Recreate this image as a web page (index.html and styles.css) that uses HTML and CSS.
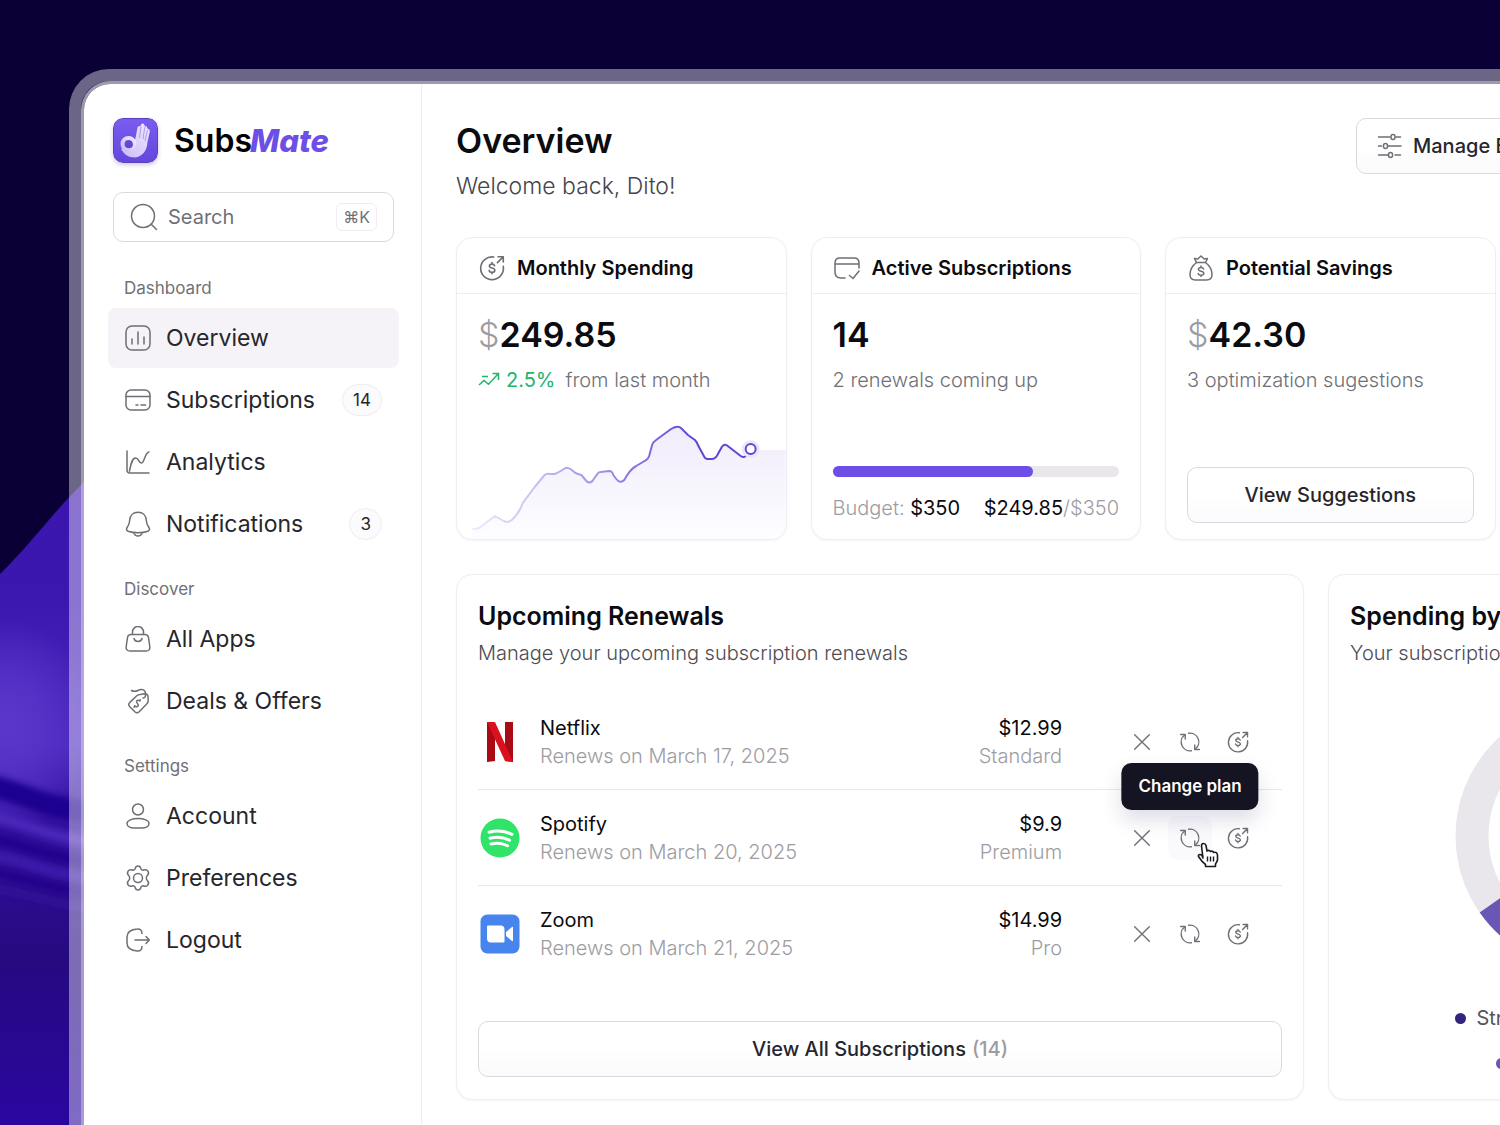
FILE: index.html
```
<!DOCTYPE html>
<html lang="en">
<head>
  <meta charset="UTF-8" />
  <meta name="viewport" content="width=device-width, initial-scale=1.0"/>
  <title>SubsMate - Overview</title>
  <link rel="stylesheet" href="styles.css">
</head>
<body>
  <!-- shared icons -->
  <svg class="sprite" aria-hidden="true">
    <symbol id="i-spend" viewBox="0 0 24 24">
      <path d="M13.5 1.9A10.5 10.5 0 1 0 22.4 10.5"/>
      <path d="M17 7l5.2-5.2M17.6 1.6h4.8v4.8"/>
      <path d="M14.4 9.9c-.3-1-1.2-1.5-2.4-1.5-1.4 0-2.4.7-2.4 1.8 0 2.5 5 1.2 5 3.8 0 1.200-1.100 1.900-2.600 1.900-1.400 0-2.400-.7-2.600-1.800M12 7v1.400M12 15.900v1.300"/>
    </symbol>
    <symbol id="i-close" viewBox="0 0 24 24">
      <path d="M4 4l16 16M20 4L4 20"/>
    </symbol>
    <symbol id="i-swap" viewBox="0 0 24 24">
      <path d="M10.500 2.400A9.700 9.700 0 0 1 17.800 19.700M13.500 21.600A9.700 9.700 0 0 1 6.200 4.300"/>
      <path d="M1.800 3.800h5v5M22.200 20.200h-5v-5"/>
    </symbol>
  </svg>

  <svg class="wallpaper" viewBox="0 0 100 1125" preserveAspectRatio="none" aria-hidden="true">
    <defs>
      <linearGradient id="wave" x1="0" y1="0" x2="0" y2="1">
        <stop offset="0" stop-color="#3a16ad"/>
        <stop offset=".2" stop-color="#3b17b0"/>
        <stop offset=".42" stop-color="#4a27bc"/>
        <stop offset=".55" stop-color="#2f0f9c"/>
        <stop offset=".75" stop-color="#260a80"/>
        <stop offset="1" stop-color="#2a06a0"/>
      </linearGradient>
      <radialGradient id="glow">
        <stop offset="0" stop-color="#5b38cc"/>
        <stop offset=".4" stop-color="#5935c9" stop-opacity=".8"/>
        <stop offset="1" stop-color="#5b38cc" stop-opacity="0"/>
      </radialGradient>
      <filter id="soft" x="-20%" y="-50%" width="140%" height="200%"><feGaussianBlur stdDeviation="3"/></filter>
    </defs>
    <path d="M0 574C30 545 55 510 84 482L100 466V1125H0z" fill="url(#wave)"/>
    <ellipse cx="8" cy="725" rx="85" ry="105" fill="url(#glow)"/>
    <g fill="none" filter="url(#soft)">
      <path d="M-10 786C25 792 40 810 110 814" stroke="#1f0090" stroke-width="22"/>
      <path d="M-10 816C25 822 45 838 110 844" stroke="#4a28ba" stroke-width="12"/>
      <path d="M-10 838C25 844 45 858 110 864" stroke="#20008e" stroke-width="10"/>
      <path d="M-10 855C25 860 45 874 110 882" stroke="#3c1bae" stroke-width="9"/>
      <path d="M-10 872C25 877 45 890 110 896" stroke="#20008a" stroke-width="8"/>
      <path d="M-10 888C25 892 45 904 110 910" stroke="#32129a" stroke-width="5"/>
    </g>
  </svg>

  <div class="frame">
    <div class="app">
      <aside class="sidebar">
        <a class="brand" href="#">
          <svg class="brand-mark" viewBox="0 0 45 45" aria-hidden="true">
            <defs>
              <linearGradient id="mark" x1="0" y1="0" x2="0" y2="1">
                <stop offset="0" stop-color="#7a5cf0"/>
                <stop offset="1" stop-color="#6546dd"/>
              </linearGradient>
              <linearGradient id="hand" x1="1" y1="0" x2="0" y2="1">
                <stop offset="0" stop-color="#efe8ff"/>
                <stop offset="1" stop-color="#cbbaf8"/>
              </linearGradient>
            </defs>
            <rect x=".5" y=".5" width="44" height="44" rx="9" fill="url(#mark)" stroke="#5c40bd"/>
            <path d="M22.500 20L24.500 9.500Q25.500 7 27.300 8.500L28 6.500Q30 4.500 31.500 7L32 8.500Q34 7.500 34.300 10L35 11Q37 10.500 36.800 13.500L34.500 24C34 32 30 38.500 22 39.500 15 39.500 11 36 8 31L12 30 20 28z" fill="url(#hand)"/>
            <circle cx="15.500" cy="26" r="6" fill="none" stroke="url(#hand)" stroke-width="4"/>
            <path d="M28 8.500L26.500 20M31.800 9L30 21M34.500 12L32 23" fill="none" stroke="#9f86ee" stroke-width=".8"/>
            <circle cx="16" cy="26.500" r="3.800" fill="#6446cf"/>
          </svg>
          <span class="brand-name">Subs<em>Mate</em></span>
        </a>

        <label class="search">
          <svg class="icon icon-lg" viewBox="0 0 28 28"><circle cx="13" cy="13" r="11.500"/><path d="M21.500 21.500l5 5"/></svg>
          <input type="search" placeholder="Search" aria-label="Search">
          <kbd>⌘K</kbd>
        </label>

        <nav>
          <section class="nav-group">
            <h2>Dashboard</h2>
            <a class="nav-item active" href="#">
              <svg class="icon" viewBox="0 0 26 26"><rect x="1" y="1" width="24" height="24" rx="6"/><path d="M7 14v5M13 7v12M19 12v7"/></svg>
              <span>Overview</span>
            </a>
            <a class="nav-item" href="#">
              <svg class="icon" viewBox="0 0 26 26"><rect x="1" y="3" width="24" height="20" rx="5"/><path d="M1 9.500h24M11 18h2M16 18h4.500"/></svg>
              <span>Subscriptions</span>
              <span class="count">14</span>
            </a>
            <a class="nav-item" href="#">
              <svg class="icon" viewBox="0 0 26 26"><path d="M2 2v19q0 3 3 3h19"/><path d="M4.500 22C6 15 7 9 10.500 9s3 5 6 5 3-10 7.500-11"/></svg>
              <span>Analytics</span>
            </a>
            <a class="nav-item" href="#">
              <svg class="icon" viewBox="0 0 26 26"><path d="M13 1.200c-5 0-8 3.400-8.300 8-.3 4.300-1 5-2.600 7.300-1 1.500-.8 3 1 3.700 5.500 2 14.300 2 19.800 0 1.800-.7 2-2.200 1-3.700-1.600-2.300-2.300-3-2.600-7.300-.3-4.600-3.300-8-8.300-8zM8.500 21.800c.8 1.800 2.300 3.200 4.500 3.200s3.700-1.400 4.500-3.200"/></svg>
              <span>Notifications</span>
              <span class="count">3</span>
            </a>
          </section>

          <section class="nav-group">
            <h2>Discover</h2>
            <a class="nav-item" href="#">
              <svg class="icon" viewBox="0 0 26 26"><path d="M6 8.500h14q3 0 3.500 3l1.300 9q.5 4.500-3.800 4.500H5q-4.300 0-3.800-4.500l1.300-9q.5-3 3.500-3z"/><path d="M7.500 8.500V6a5.500 5.500 0 0 1 11 0v2.500M9 12.500c1 4 7 4 8 0"/></svg>
              <span>All Apps</span>
            </a>
            <a class="nav-item" href="#">
              <svg class="icon" viewBox="0 0 26 26"><path d="M15 6.500l5-.7q2.500 0 3 2.500l.2 4.200q0 2-1.500 3.500l-7.500 7.800q-2.200 2-4.400 0l-5-5q-2.100-2.200 0-4.400l7-6.600q1.400-1.200 3.200-1.300z"/><path d="M6.500 2.500c4 2.500 6-.5 9.500-1 4-.3 5 3 4.500 6-.2 1.500-1 2.500-2.500 2.500"/><path d="M15 13c-1-1.200-2.500-1-3.300 0-1.400 2 2.800 3 1.400 5-.9 1.100-2.500 1-3.500-.2M15.300 11.700l-.9 1M10 18.200l-1 1"/></svg>
              <span>Deals &amp; Offers</span>
            </a>
          </section>

          <section class="nav-group">
            <h2>Settings</h2>
            <a class="nav-item" href="#">
              <svg class="icon" viewBox="0 0 26 26"><circle cx="13" cy="6.500" r="5.500"/><path d="M13 15.500c6 0 11 2 11 5s-3.500 4.500-7 4.500H9c-3.500 0-7-1.500-7-4.500s5-5 11-5z"/></svg>
              <span>Account</span>
            </a>
            <a class="nav-item" href="#">
              <svg class="icon" viewBox="0 0 26 26"><circle cx="13" cy="13" r="4.500"/><path d="M10.200 3.300c.3-1.400 1.200-2.300 2.800-2.300s2.500.9 2.800 2.300c.3 1.500 1.600 2.200 3 1.700 1.700-.6 3.100-.5 4.100 1.100s.8 3-.4 4.100c-1.600 1.500-1.600 4.100 0 5.600 1.200 1.100 1.400 2.500.4 4.100s-2.400 1.700-4.100 1.100c-1.400-.5-2.700.2-3 1.700-.3 1.400-1.200 2.300-2.800 2.300s-2.500-.9-2.800-2.300c-.3-1.500-1.600-2.200-3-1.700-1.700.6-3.100.5-4.100-1.100s-.8-3 .4-4.100c1.600-1.500 1.600-4.100 0-5.600-1.200-1.100-1.400-2.500-.4-4.100S5.500 4.400 7.200 5c1.400.5 2.700-.2 3-1.700z"/></svg>
              <span>Preferences</span>
            </a>
            <a class="nav-item" href="#">
              <svg class="icon" viewBox="0 0 26 26"><path d="M17 6.500C17 3.500 15 1.600 12.500 2 6 2.500 2 5.500 2 10v6c0 4.500 4 7.500 10.500 8 2.500.4 4.500-1.500 4.500-4.500"/><path d="M10 13h14M21 9.500l3.300 3.500-3.300 3.500"/></svg>
              <span>Logout</span>
            </a>
          </section>
        </nav>
      </aside>

      <main>
        <header class="page-head">
          <div>
            <h1>Overview</h1>
            <p>Welcome back, Dito!</p>
          </div>
          <div class="head-actions">
            <button type="button" class="btn">
              <svg class="icon" viewBox="0 0 26 26"><path d="M1.500 4H13M19 4h4.500M1.500 13h3M10.500 13h13.500M1.500 22H11M18 22h5.500"/><rect x="14" y="1.500" width="4" height="5" rx="2"/><rect x="6.500" y="10.500" width="4" height="5" rx="2"/><rect x="11.500" y="19.500" width="4" height="5" rx="2"/></svg>
              Manage Budget
            </button>
            <button type="button" class="btn btn-dark">
              <svg class="icon" viewBox="0 0 26 26"><path d="M13 4v18M4 13h18"/></svg>
              Add Subscription
            </button>
          </div>
        </header>

        <div class="stats">
          <section class="card stat">
            <h2><svg class="icon"><use href="#i-spend"/></svg>Monthly Spending</h2>
            <div class="stat-body">
              <p class="figure"><span>$</span>249.85</p>
              <p class="note">
                <svg class="trend" viewBox="0 0 22 16" aria-hidden="true"><path d="M1 13l5-4.500 4.500 3.800L20 2M14.500 1.500H20.500V8M4 4.500h6"/></svg>
                <span class="up">2.5%</span> from last month
              </p>
            </div>
            <svg class="chart" viewBox="0 0 330 124" preserveAspectRatio="none" role="img" aria-label="Spending trend">
              <defs>
                <linearGradient id="stroke" x1="0" x2="1" y1="0" y2="0">
                  <stop offset="0" stop-color="#6a4fd8" stop-opacity=".1"/>
                  <stop offset=".4" stop-color="#6a4fd8" stop-opacity=".55"/>
                  <stop offset=".8" stop-color="#5f44d6"/>
                </linearGradient>
                <linearGradient id="fill" x1="0" x2="0" y1="0" y2="1">
                  <stop offset="0" stop-color="#f0ecfc"/>
                  <stop offset="1" stop-color="#fefdff"/>
                </linearGradient>
              </defs>
              <path fill="url(#fill)" d="M15 114L23 112 38 101 51 107 60 100 66 88 80 70 90 59 100 58 111 52 125 60 130 67H136L142 58 155 56 160 65 165 67 176 52 192 44 197 27 218 12H224L240 26 250 44H259L267 30H271L287 43 294 35H330V124H15z"/>
              <path fill="none" stroke="url(#stroke)" stroke-width="2" stroke-linejoin="round" stroke-linecap="round" d="M16 114Q22 114 25 111L38 101 47 106Q51 108 55 105 62 99 66 88L78 72 88 60Q90 58 94 59H98Q101 58 104 56L109 53Q111 52 114 54L119 58Q121 59 125 60L130 66Q133 69 136 66L141 59Q142 57 144 57L153 56Q156 56 157 60L160 64Q164 69 168 65 174 54 180 51L190 45Q192 44 193 41L196 30Q197 27 200 25L215 14Q222 10 225 13L232 20 239 25Q241 27 242 30L248 41Q249 44 252 44H256Q259 44 261 41L266 32Q269 28 272 31L285 41Q288 43 290 41L295 34"/>
              <circle cx="295" cy="34" r="9" fill="#ece6fc"/>
              <circle cx="295" cy="34" r="5" fill="#fff" stroke="#5f44d6" stroke-width="2"/>
            </svg>
          </section>

          <section class="card stat">
            <h2><svg class="icon" viewBox="0 0 26 26"><path d="M11 23H7q-6 0-6-6V8q0-5 5-5h14q5 0 5 5v5M1 9h24M15.500 20.500l3.500 3 6-7.500"/></svg>Active Subscriptions</h2>
            <div class="stat-body">
              <p class="figure">14</p>
              <p class="note">2 renewals coming up</p>
              <div class="budget">
                <div class="bar"><div class="bar-fill" style="width: 70%"></div></div>
                <p><span>Budget: <b>$350</b></span><span><b>$249.85</b>/$350</span></p>
              </div>
            </div>
          </section>

          <section class="card stat">
            <h2><svg class="icon" viewBox="0 0 26 26"><path d="M8.500 7.500h9c4 3 6.500 7.500 6.500 12 0 3.500-2 5.500-5.500 5.500h-11C4 25 2 23 2 19.500c0-4.500 2.500-9 6.500-12z"/><path d="M8.500 7.500L6.500 3.500l3.200.5L13 1l3.300 3 3.200-.5-2 4M15.600 14c-.3-1-1.300-1.600-2.600-1.600-1.500 0-2.600.8-2.600 1.900 0 2.600 5.400 1.300 5.400 4 0 1.200-1.200 2-2.800 2-1.500 0-2.600-.8-2.800-1.900M13 11v1.400M13 20.300v1.300"/></svg>Potential Savings</h2>
            <div class="stat-body">
              <p class="figure"><span>$</span>42.30</p>
              <p class="note">3 optimization sugestions</p>
              <button type="button" class="btn btn-wide">View Suggestions</button>
            </div>
          </section>

          <section class="card stat">
            <h2>Next Payment</h2>
            <div class="stat-body">
              <p class="figure"><span>$</span>12.99</p>
              <p class="note">Netflix, March 17</p>
            </div>
          </section>
        </div>

        <div class="panels">
          <section class="card panel">
            <h2>Upcoming Renewals</h2>
            <p class="lead">Manage your upcoming subscription renewals</p>
            <ul class="renewals">
              <li>
                <svg class="logo" viewBox="0 0 40 40" aria-hidden="true"><path d="M7 0h8v39l-8 1zM25 0h8v40l-8-1z" fill="#a90a14"/><path d="M7 0h8l18 40q-4-1-8-1z" fill="#d9101e"/></svg>
                <div class="who"><strong>Netflix</strong><span>Renews on March 17, 2025</span></div>
                <div class="price"><strong>$12.99</strong><span>Standard</span></div>
                <div class="actions">
                  <button type="button" aria-label="Cancel"><svg class="icon-sm"><use href="#i-close"/></svg></button>
                  <button type="button" aria-label="Change plan"><svg class="icon-sm"><use href="#i-swap"/></svg></button>
                  <button type="button" aria-label="Pay now"><svg class="icon-sm"><use href="#i-spend"/></svg></button>
                </div>
              </li>
              <li>
                <svg class="logo" viewBox="0 0 40 40" aria-hidden="true"><circle cx="20" cy="20" r="19.500" fill="#2fe468"/><path d="M9 14.200c8-2.200 16-1.400 23 2.200M10 20.200c7-1.900 13.500-1.200 19.500 2M11 26c6-1.500 11.500-1 16.500 1.700" fill="none" stroke="#fff" stroke-width="3" stroke-linecap="round"/></svg>
                <div class="who"><strong>Spotify</strong><span>Renews on March 20, 2025</span></div>
                <div class="price"><strong>$9.9</strong><span>Premium</span></div>
                <div class="actions">
                  <button type="button" aria-label="Cancel"><svg class="icon-sm"><use href="#i-close"/></svg></button>
                  <button type="button" class="hovered" aria-label="Change plan">
                    <svg class="icon-sm"><use href="#i-swap"/></svg>
                    <span class="tooltip" role="tooltip">Change plan</span>
                    <svg class="cursor" viewBox="0 0 22 26" aria-hidden="true"><path d="M6 16L4.500 4Q4.500 1.500 6.500 1.500T9 3.500L10 9Q12 7.500 13.500 9.500 15.500 8.500 16.800 10.500 20 9.500 20.500 13V18Q20 20 18.500 22V24.500H8.500V22.500Q5 20 1.500 14.500 1 12.500 3 12.500T6 16z" fill="#fff" stroke="#1a1a22" stroke-width="1.600" stroke-linejoin="round"/><path d="M10.500 14.500v5M13.500 14.500v5M16.500 14.500v5" stroke="#1a1a22" stroke-width="1.400"/></svg>
                  </button>
                  <button type="button" aria-label="Pay now"><svg class="icon-sm"><use href="#i-spend"/></svg></button>
                </div>
              </li>
              <li>
                <svg class="logo" viewBox="0 0 40 40" aria-hidden="true"><rect x=".5" y=".5" width="39" height="39" rx="7" fill="#4784ee"/><path d="M7 12.500q0-1 1-1h12.500q4 0 4 4v12q0 1-1 1H11q-4 0-4-4zM26 18l6-5q1-.7 1 .5v13q0 1.200-1 .5l-6-5z" fill="#fff"/></svg>
                <div class="who"><strong>Zoom</strong><span>Renews on March 21, 2025</span></div>
                <div class="price"><strong>$14.99</strong><span>Pro</span></div>
                <div class="actions">
                  <button type="button" aria-label="Cancel"><svg class="icon-sm"><use href="#i-close"/></svg></button>
                  <button type="button" aria-label="Change plan"><svg class="icon-sm"><use href="#i-swap"/></svg></button>
                  <button type="button" aria-label="Pay now"><svg class="icon-sm"><use href="#i-spend"/></svg></button>
                </div>
              </li>
            </ul>
            <button type="button" class="btn btn-wide">View All Subscriptions <span>(14)</span></button>
          </section>

          <section class="card panel">
            <h2>Spending by Category</h2>
            <p class="lead">Your subscription spending breakdown</p>
            <svg class="donut" viewBox="0 0 268 268" role="img" aria-label="Spending by category">
              <g fill="none" stroke-width="33">
                <circle cx="134" cy="134" r="117" stroke="#e9e7ec"/>
                <path d="M38.200 201.100A117 117 0 0 0 134 251" stroke="#6a57b5"/>
                <path d="M134 251A117 117 0 0 0 251 134" stroke="#35247f"/>
              </g>
            </svg>
            <ul class="legend">
              <li><i class="dot dot-dark"></i>Streaming</li>
              <li><i class="dot dot-light"></i>Productivity</li>
              <li><i class="dot dot-mid"></i>Design</li>
              <li><i class="dot dot-light"></i>Others</li>
            </ul>
          </section>
        </div>
      </main>
    </div>
  </div>
</body>
</html>
```
FILE: styles.css
```
:root {
  --color-primary: #6d4ee6;
  --color-ink: #0b0b10;
  --color-text: #26262c;
  --color-subtle: #707076;
  --color-muted: #9d9ca2;
  --color-line: #efedf2;
  --color-border: #dbd9df;
  --font: Inter, "Liberation Sans", sans-serif;
}
* {
  box-sizing: border-box;
}
body {
  margin: 0;
  min-height: 100vh;
  overflow: hidden;
  position: relative;
  display: flow-root;
  font-family: var(--font);
  color: var(--color-text);
  background: #0a0036;
}
h1, h2, p, ul {
  margin: 0;
  padding: 0;
}
ul {
  list-style: none;
}
a {
  color: inherit;
  text-decoration: none;
}
button {
  font-family: inherit;
  color: inherit;
  cursor: pointer;
}
.sprite {
  position: absolute;
  width: 0;
  height: 0;
}
.wallpaper {
  position: absolute;
  left: 0;
  top: 0;
  width: 100px;
  height: 100%;
}

/* window */
.frame {
  position: relative;
  width: max-content;
  margin: 69px 0 0 69px;
  border: 12px solid rgba(255, 255, 255, 0.4);
  border-bottom: 0;
  border-radius: 40px 40px 0 0;
}
.app {
  display: flex;
  width: calc(120vw + 6px);
  min-height: calc(100vh - 81px);
  background: #fff;
  background-clip: padding-box;
  border: 3px solid rgba(255, 255, 255, 0.6);
  border-bottom: 0;
  border-radius: 29px 29px 0 0;
}

/* icons */
.icon, .icon-sm {
  flex: none;
  fill: none;
  stroke: #6e6e74;
  stroke-width: 1.5;
  stroke-linecap: round;
  stroke-linejoin: round;
}
.icon {
  width: 26px;
  height: 26px;
}
.icon-lg {
  width: 28px;
  height: 28px;
}
.icon-sm {
  width: 22px;
  height: 22px;
}

/* sidebar */
.sidebar {
  flex: none;
  width: 338px;
  padding: 34px 22px 24px 24px;
  border-right: 1px solid var(--color-line);
}
.brand {
  display: flex;
  align-items: center;
  gap: 16px;
  margin: 0 5px 29px;
}
.brand-mark {
  width: 45px;
  height: 45px;
  border-radius: 10px;
  box-shadow: 0 2px 4px rgba(60, 40, 120, 0.25);
}
.brand-name {
  font-size: 32px;
  line-height: 44px;
  font-weight: 600;
  color: #000;
}
.brand-name em {
  margin-left: -2px;
  font-weight: 800;
  font-size: 31px;
  color: var(--color-primary);
}
.search {
  display: flex;
  align-items: center;
  gap: 10px;
  height: 50px;
  margin: 0 5px 36px;
  padding: 0 16px;
  border: 1px solid var(--color-border);
  border-radius: 10px;
}
.search input {
  flex: 1;
  min-width: 0;
  padding: 0;
  border: 0;
  outline: 0;
  background: none;
  font: 400 20px/28px var(--font);
}
.search input::placeholder {
  color: var(--color-subtle);
  opacity: 1;
}
kbd {
  padding: 2px 6px;
  border: 1px solid var(--color-line);
  border-radius: 6px;
  font: 400 16px/22px var(--font);
  color: var(--color-subtle);
}
.nav-group {
  display: flex;
  flex-direction: column;
  gap: 2px;
  margin-bottom: 25px;
}
.nav-group:last-child {
  margin-bottom: 0;
}
.nav-group h2 {
  padding: 0 16px 7px;
  font-size: 17px;
  line-height: 21px;
  font-weight: 400;
  color: var(--color-subtle);
}
.nav-item {
  display: flex;
  align-items: center;
  gap: 15px;
  height: 60px;
  padding: 0 17px;
  border-radius: 8px;
  font-size: 23px;
}
.nav-item.active {
  background: #f5f3f7;
}
.count {
  margin-left: auto;
  padding: 0 10px;
  border: 1px solid var(--color-line);
  border-radius: 16px;
  background: #fbfafc;
  font-size: 17px;
  line-height: 30px;
}

/* content */
main {
  flex: 1;
  min-width: 0;
  padding: 34px 34px 25px;
}
.page-head {
  display: flex;
  justify-content: space-between;
  align-items: flex-start;
  margin-bottom: 29px;
}
h1 {
  font-size: 34px;
  line-height: 46px;
  font-weight: 600;
  color: var(--color-ink);
}
.page-head p {
  font-size: 23px;
  line-height: 44px;
  font-weight: 300;
  color: #45454b;
}
.head-actions {
  display: flex;
  gap: 16px;
}
.btn {
  display: flex;
  align-items: center;
  justify-content: center;
  gap: 10px;
  height: 56px;
  padding: 0 20px;
  border: 1px solid var(--color-border);
  border-radius: 10px;
  background: linear-gradient(#fff 50%, #fbfafc);
  font-size: 20px;
  font-weight: 500;
}
.btn span {
  color: var(--color-muted);
}
.btn-wide {
  gap: 6px;
  width: 100%;
  margin-top: auto;
}
.btn-dark {
  padding: 0 23px;
  background: #17152a;
  color: #fff;
}
.btn-dark .icon {
  stroke: #fff;
}
.card {
  border: 1px solid var(--color-line);
  border-radius: 16px;
  background: #fff;
  box-shadow: 0 1px 2px rgba(60, 40, 120, 0.05);
}

/* stat cards */
.stats {
  display: grid;
  grid-template-columns: repeat(4, 1fr);
  gap: 24px;
  margin-bottom: 34px;
}
.stat {
  position: relative;
  display: flex;
  flex-direction: column;
  height: 303px;
  overflow: hidden;
}
.stat h2 {
  display: flex;
  align-items: center;
  gap: 12px;
  height: 56px;
  padding: 4px 22px 0;
  border-bottom: 1px solid var(--color-line);
  font-size: 20px;
  font-weight: 600;
  color: var(--color-ink);
}
.stat-body {
  flex: 1;
  display: flex;
  flex-direction: column;
  padding: 17px 21px 16px;
}
.figure {
  font-size: 34px;
  line-height: 48px;
  font-weight: 600;
  color: var(--color-ink);
}
.figure span {
  font-weight: 300;
  color: var(--color-muted);
}
.note {
  display: flex;
  align-items: center;
  font-size: 20px;
  line-height: 42px;
  font-weight: 300;
  color: var(--color-subtle);
}
.trend {
  width: 22px;
  height: 16px;
  margin-right: 6px;
  fill: none;
  stroke: #22b56b;
  stroke-width: 1.5;
}
.up {
  margin-right: 10px;
  font-weight: 400;
  color: #22b56b;
}
.chart {
  position: absolute;
  left: 0;
  bottom: 0;
  width: 100%;
  height: 124px;
}
.budget {
  margin-top: auto;
}
.bar {
  height: 11px;
  border-radius: 6px;
  background: #e9e7ec;
}
.bar-fill {
  height: 100%;
  border-radius: 6px;
  background: var(--color-primary);
}
.budget p {
  display: flex;
  justify-content: space-between;
  margin-top: 16px;
  font-size: 20px;
  line-height: 30px;
  font-weight: 300;
  color: var(--color-muted);
}
.budget b {
  font-weight: 400;
  color: var(--color-ink);
}

/* panels */
.panels {
  display: grid;
  grid-template-columns: 13fr 8fr;
  gap: 24px;
}
.panel {
  display: flex;
  flex-direction: column;
  min-width: 0;
  height: 526px;
  padding: 22px 21px;
}
.panel h2 {
  font-size: 25px;
  line-height: 38px;
  font-weight: 600;
  color: var(--color-ink);
}
.lead {
  font-size: 20px;
  line-height: 36px;
  font-weight: 300;
  color: #4c4c52;
}
.renewals {
  margin-top: 23px;
}
.renewals li {
  display: flex;
  align-items: center;
  height: 96px;
  padding: 0 22px 0 2px;
  border-bottom: 1px solid #eae8ed;
}
.renewals li:last-child {
  border-bottom: 0;
}
.logo {
  width: 40px;
  height: 40px;
  margin-right: 20px;
}
.who, .price {
  display: flex;
  flex-direction: column;
  font-size: 20px;
  line-height: 28px;
  font-weight: 300;
  color: var(--color-muted);
}
.who strong, .price strong {
  font-weight: 400;
  color: var(--color-ink);
}
.price {
  margin-left: auto;
  text-align: right;
}
.actions {
  display: flex;
  gap: 4px;
  margin-left: 58px;
}
.actions button {
  position: relative;
  display: flex;
  align-items: center;
  justify-content: center;
  width: 44px;
  height: 44px;
  padding: 0;
  border: 0;
  border-radius: 10px;
  background: none;
}
.actions .hovered {
  background: #faf9fc;
}
.tooltip {
  position: absolute;
  bottom: 50px;
  left: 50%;
  transform: translateX(-50%);
  padding: 0 17px;
  border-radius: 10px;
  background: #151422;
  box-shadow: 0 10px 20px rgba(40, 30, 90, 0.15);
  color: #fff;
  font-size: 17px;
  line-height: 47px;
  font-weight: 600;
  white-space: nowrap;
}
.cursor {
  position: absolute;
  left: 29px;
  top: 26px;
  width: 22px;
  height: 26px;
}
.donut {
  flex: none;
  align-self: center;
  width: 268px;
  height: 268px;
  margin-top: 31px;
}
.legend {
  display: flex;
  flex: none;
  flex-wrap: wrap;
  align-self: center;
  justify-content: center;
  column-gap: 16px;
  width: 300px;
  margin-top: 26px;
}
.legend li {
  display: flex;
  align-items: center;
  gap: 10px;
  font-size: 20px;
  line-height: 45px;
  color: #55555b;
}
.dot {
  width: 11px;
  height: 11px;
  border-radius: 50%;
}
.dot-dark {
  background: #35247f;
}
.dot-mid {
  background: #6a57b5;
}
.dot-light {
  background: #d9d6e0;
}
```
